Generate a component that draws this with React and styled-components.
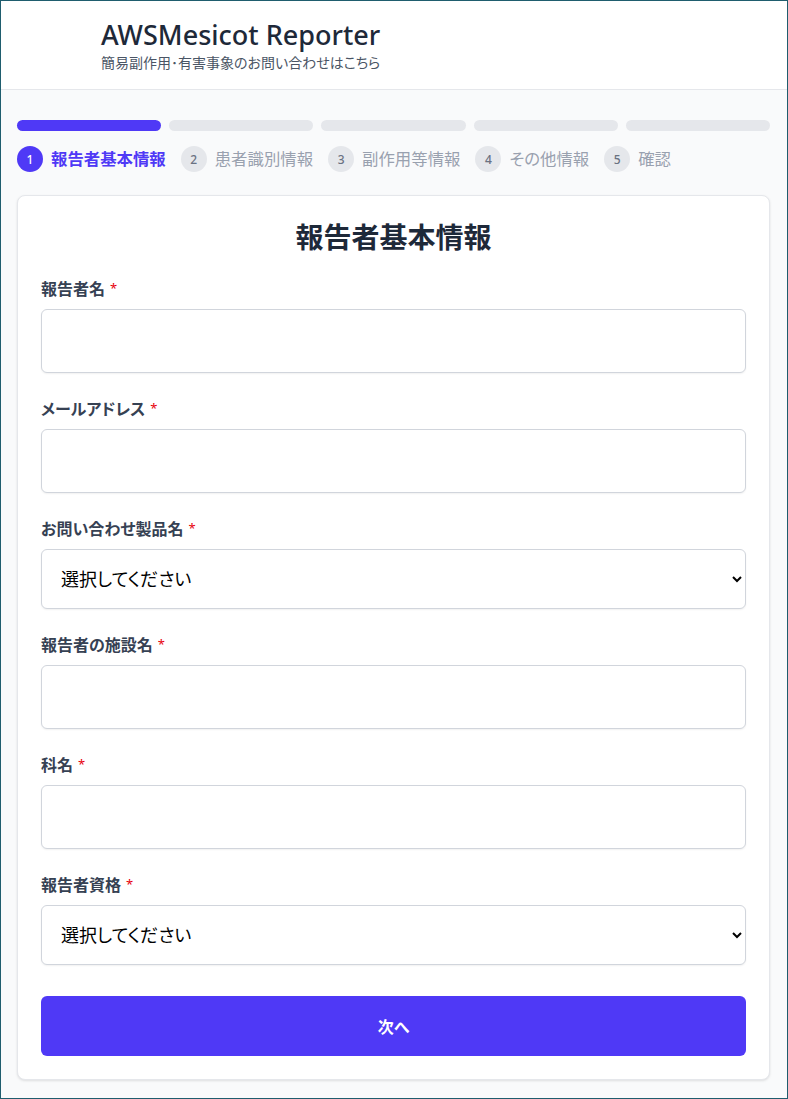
import React from "react";
import styled, { createGlobalStyle } from "styled-components";

const GlobalStyle = createGlobalStyle`
  * {
    box-sizing: border-box;
  }

  body {
    margin: 0;
    background: #f9fafb;
    font-family: "Noto Sans", "Noto Sans CJK JP", sans-serif;
    font-feature-settings: "palt";
    color: #101828;
  }
`;

const Page = styled.div`
  min-height: 100vh;
  border: 1px solid #1f5d6e;
  background: #f9fafb;
`;

const Header = styled.header`
  background: #fff;
  border-bottom: 1px solid #e5e7eb;
  padding: 16px 0 16px 100px;
`;

const AppTitle = styled.h1`
  margin: 0;
  font-size: 27px;
  font-weight: 500;
  line-height: 36px;
  color: #1e2939;
`;

const Subtitle = styled.p`
  margin: 0;
  font-size: 14px;
  line-height: 20px;
  color: #4a5565;
`;

const Main = styled.main`
  padding: 30px 17px 18px 16px;
`;

const ProgressBar = styled.div`
  display: grid;
  grid-template-columns: repeat(5, 1fr);
  gap: 8px;
`;

const Segment = styled.div`
  height: 11px;
  border-radius: 999px;
  background: ${(p) => (p.$active ? "#4f39f6" : "#e5e7eb")};
`;

const Steps = styled.ol`
  display: flex;
  align-items: center;
  gap: 15px;
  list-style: none;
  margin: 15px 0 23px;
  padding: 0;
`;

const Step = styled.li`
  display: flex;
  align-items: center;
  gap: 8px;
`;

const StepNumber = styled.span`
  width: 26px;
  height: 26px;
  border-radius: 50%;
  display: flex;
  align-items: center;
  justify-content: center;
  font-size: 12px;
  font-weight: 500;
  background: ${(p) => (p.$active ? "#4f39f6" : "#e5e7eb")};
  color: ${(p) => (p.$active ? "#fff" : "#6a7282")};
`;

const StepLabel = styled.span`
  font-size: 16.4px;
  line-height: 24px;
  font-weight: ${(p) => (p.$active ? 700 : 400)};
  color: ${(p) => (p.$active ? "#4f39f6" : "#99a1af")};
`;

const Card = styled.section`
  background: #fff;
  border: 1px solid #e5e7eb;
  border-radius: 8px;
  box-shadow: 0 1px 3px rgba(0, 0, 0, 0.08), 0 1px 2px rgba(0, 0, 0, 0.04);
  padding: 23px 23px 23px;
`;

const CardTitle = styled.h2`
  margin: 0 0 22px;
  text-align: center;
  font-size: 28px;
  line-height: 36px;
  font-weight: 700;
  color: #1e2939;
`;

const Field = styled.div`
  margin-bottom: 24px;
`;

const Label = styled.label`
  display: block;
  height: 24px;
  margin-bottom: 8px;
  font-size: 16px;
  line-height: 24px;
  font-weight: 700;
  color: #364153;
`;

const Required = styled.span`
  color: #e7000b;
  margin-left: 5px;
  font-size: 13px;
  font-weight: 400;
  line-height: 0;
  vertical-align: 2px;
`;

const TextInput = styled.input`
  display: block;
  width: 100%;
  height: 64px;
  padding: 0 20px;
  border: 1px solid #d1d5dc;
  border-radius: 6px;
  background: #fff;
  box-shadow: 0 1px 2px rgba(0, 0, 0, 0.06);
  font: inherit;
  font-size: 18px;
  outline: none;
`;

const Select = styled.select`
  display: block;
  width: 100%;
  height: 60px;
  padding: 0 16px 0 15px;
  border: 1px solid #d1d5dc;
  border-radius: 6px;
  background: #fff;
  box-shadow: 0 1px 2px rgba(0, 0, 0, 0.06);
  font: inherit;
  font-size: 18px;
  color: #000;
  outline: none;
`;

const NextButton = styled.button`
  display: block;
  width: 100%;
  height: 60px;
  margin-top: 31px;
  border: none;
  border-radius: 6px;
  background: #4f39f6;
  color: #fff;
  font: inherit;
  font-size: 16px;
  font-weight: 700;
  cursor: pointer;
`;

const Form = styled.form`
  & > ${Field}:last-of-type {
    margin-bottom: 0;
  }
`;

const steps = ["報告者基本情報", "患者識別情報", "副作用等情報", "その他情報", "確認"];

const fields = [
  { label: "報告者名", type: "text" },
  { label: "メールアドレス", type: "email" },
  { label: "お問い合わせ製品名", type: "select" },
  { label: "報告者の施設名", type: "text" },
  { label: "科名", type: "text" },
  { label: "報告者資格", type: "select" },
];

export default function App() {
  return (
    <Page>
      <GlobalStyle />
      <Header>
        <AppTitle>AWSMesicot Reporter</AppTitle>
        <Subtitle>簡易副作用･有害事象のお問い合わせはこちら</Subtitle>
      </Header>
      <Main>
        <ProgressBar>
          {steps.map((s, i) => (
            <Segment key={s} $active={i === 0} />
          ))}
        </ProgressBar>
        <Steps>
          {steps.map((s, i) => (
            <Step key={s}>
              <StepNumber $active={i === 0}>{i + 1}</StepNumber>
              <StepLabel $active={i === 0}>{s}</StepLabel>
            </Step>
          ))}
        </Steps>
        <Card>
          <CardTitle>報告者基本情報</CardTitle>
          <Form onSubmit={(e) => e.preventDefault()}>
            {fields.map((f) => (
              <Field key={f.label}>
                <Label>
                  {f.label}
                  <Required>*</Required>
                </Label>
                {f.type === "select" ? (
                  <Select defaultValue="">
                    <option value="">選択してください</option>
                  </Select>
                ) : (
                  <TextInput type={f.type} />
                )}
              </Field>
            ))}
            <NextButton type="button">次へ</NextButton>
          </Form>
        </Card>
      </Main>
    </Page>
  );
}
